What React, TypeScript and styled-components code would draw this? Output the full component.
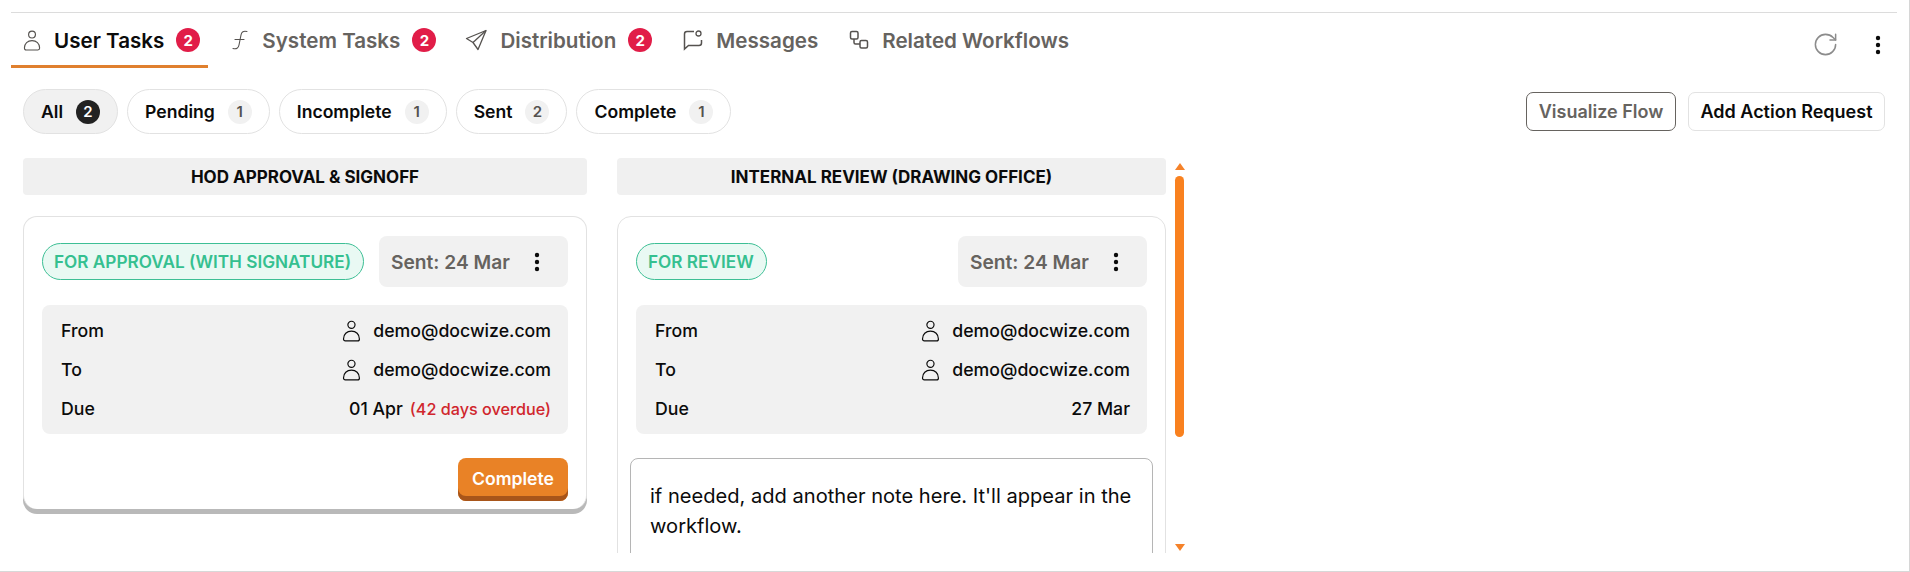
import React from "react";
import styled, { createGlobalStyle } from "styled-components";
import { RotateCw } from "lucide-react";

const GlobalStyle = createGlobalStyle`
  html, body {
    margin: 0;
    padding: 0;
    background: #ffffff;
  }
  body {
    font-family: "Inter", "Liberation Sans", sans-serif;
    color: #0b0b0b;
  }
  * {
    box-sizing: border-box;
  }
`;

const Page = styled.div`
  width: 1910px;
  height: 572px;
  padding: 12px 0 0 11px;
  border-right: 1px solid #d6d6d6;
  border-bottom: 1px solid #d8d8d8;
  overflow: hidden;
`;

const TabBar = styled.div`
  display: flex;
  align-items: stretch;
  height: 56px;
  margin-right: 12px;
  padding-right: 13px;
  border-top: 1px solid #dcdcdc;
`;

const Tab = styled.div<{ $active?: boolean }>`
  display: flex;
  align-items: center;
  height: 55px;
  padding: 2px 8px 0 12px;
  margin-right: 11px;
  font-size: 20.6px;
  font-weight: 600;
  color: ${(p) => (p.$active ? "#0b0b0b" : "#66635f")};
  border-bottom: 3px solid ${(p) => (p.$active ? "#e0802e" : "transparent")};
`;

const TabIcon = styled.span`
  display: flex;
  min-width: 18px;
  height: 22px;
  margin-right: 13px;
  color: #55524f;
  align-items: center;
  justify-content: center;
`;

const TabBadge = styled.span`
  display: flex;
  align-items: center;
  justify-content: center;
  width: 24px;
  height: 24px;
  margin-left: 12px;
  border-radius: 50%;
  background: #e11d48;
  color: #fff;
  font-size: 15px;
  font-weight: 700;
`;

const TabActions = styled.div`
  display: flex;
  align-items: center;
  margin-left: auto;
  gap: 33px;
  padding-top: 8px;
  color: #8c8c8c;
`;

const DotsButton = styled.span`
  display: flex;
  align-items: center;
  justify-content: center;
  width: 12px;
  color: #0b0b0b;
`;

const FilterRow = styled.div`
  display: flex;
  align-items: center;
  height: 45px;
  margin: 21px 24px 0 12px;
`;

const Pill = styled.div<{ $active?: boolean }>`
  display: flex;
  align-items: center;
  height: 45px;
  padding: 0 17px;
  margin-right: 9px;
  border: 1px solid #e2e2e2;
  border-radius: 23px;
  background: ${(p) => (p.$active ? "#f1f1f1" : "#fff")};
  font-size: 17.6px;
  font-weight: 600;
`;

const PillCount = styled.span<{ $active?: boolean }>`
  display: flex;
  align-items: center;
  justify-content: center;
  width: 24px;
  height: 24px;
  margin-left: 13px;
  border-radius: 50%;
  background: ${(p) => (p.$active ? "#222222" : "#f1f1f1")};
  color: ${(p) => (p.$active ? "#fff" : "#55524f")};
  font-size: 15px;
  font-weight: 600;
`;

const FilterActions = styled.div`
  display: flex;
  align-items: center;
  margin-left: auto;
  gap: 12px;
`;

const OutlineButton = styled.button`
  height: 39px;
  width: 150px;
  padding: 0;
  border: 1px solid #66635f;
  border-radius: 7px;
  background: #fff;
  color: #66635f;
  font-family: inherit;
  font-size: 18px;
  font-weight: 600;
`;

const PlainButton = styled(OutlineButton)`
  width: 197px;
  border-color: #e2e2e2;
  color: #0b0b0b;
`;

const Board = styled.div`
  display: flex;
  height: 395px;
  margin: 24px 0 0 12px;
`;

const Column = styled.div<{ $width: number }>`
  display: flex;
  flex-direction: column;
  width: ${(p) => p.$width}px;
  margin-right: 30px;
  overflow: hidden;
  flex: none;
`;

const ColumnTitle = styled.div`
  display: flex;
  align-items: center;
  justify-content: center;
  height: 37px;
  flex: none;
  border-radius: 4px;
  background: #f0f0f0;
  font-size: 17px;
  font-weight: 700;
`;

const Card = styled.div<{ $raised?: boolean }>`
  margin-top: 21px;
  padding: 19px 18px 18px;
  border: 1px solid #e2e2e2;
  border-radius: 14px;
  background: #fff;
  flex: none;
  ${(p) =>
    p.$raised
      ? "height: 293px; border-bottom-width: 0; box-shadow: 0 5px 0 #b9b9b9;"
      : "height: 360px; padding-bottom: 0;"}
`;

const CardHead = styled.div`
  display: flex;
  align-items: center;
  justify-content: space-between;
  height: 51px;
`;

const TypeBadge = styled.span`
  display: inline-flex;
  align-items: center;
  height: 37px;
  padding: 0 12px 0 11px;
  border: 1px solid #3dbf95;
  border-radius: 19px;
  background: #e9f9f3;
  color: #35c090;
  font-size: 17.2px;
  font-weight: 600;
  white-space: nowrap;
`;

const SentBox = styled.div`
  display: flex;
  align-items: center;
  width: 189px;
  height: 51px;
  padding: 0 25px 0 12px;
  justify-content: space-between;
  border-radius: 8px;
  background: #f1f1f1;
  color: #66635f;
  font-size: 19.2px;
  font-weight: 600;
  white-space: nowrap;
`;

const InfoBox = styled.div`
  display: flex;
  flex-direction: column;
  justify-content: center;
  height: 129px;
  margin-top: 18px;
  padding: 0 17px 0 19px;
  border-radius: 8px;
  background: #f1f1f1;
`;

const InfoRow = styled.div`
  display: flex;
  align-items: center;
  justify-content: space-between;
  height: 39px;
  font-size: 17.7px;
  font-weight: 500;
`;

const InfoValue = styled.span`
  display: flex;
  align-items: center;
  gap: 12px;
`;

const Overdue = styled.span`
  margin-left: -5px;
  font-size: 16.2px;
  color: #d0262d;
`;

const CardFoot = styled.div`
  display: flex;
  justify-content: flex-end;
  margin-top: 24px;
`;

const CompleteButton = styled.button`
  width: 110px;
  height: 43px;
  padding: 0 0 2px;
  border: none;
  border-radius: 8px;
  background: #e98226;
  box-shadow: inset 0 -5px 0 #a8551a;
  color: #fff;
  font-family: inherit;
  font-size: 17.6px;
  font-weight: 600;
`;

const NoteBox = styled.div`
  height: 140px;
  margin: 24px -6px 0;
  padding: 22px 19px;
  border: 1px solid #b5b5b5;
  border-radius: 8px;
  background: #fff;
  font-size: 20.1px;
  line-height: 30px;
`;

const ScrollTrack = styled.div`
  display: flex;
  flex-direction: column;
  align-items: center;
  width: 9px;
  margin-left: -21px;
  height: 395px;
  flex: none;
`;

const ScrollArrow = styled.span<{ $down?: boolean }>`
  flex: none;
  width: 0;
  height: 0;
  margin-top: ${(p) => (p.$down ? "107px" : "5px")};
  border-left: 5px solid transparent;
  border-right: 5px solid transparent;
  ${(p) => (p.$down ? "border-top" : "border-bottom")}: 7px solid #f5822a;
`;

const ScrollThumb = styled.div`
  flex: none;
  width: 9px;
  height: 261px;
  margin-top: 6px;
  border-radius: 5px;
  background: #f9811f;
`;

const SendIcon = styled.svg`
  margin-left: -2px;
`;

const UserSvg = ({ size = 22 }: { size?: number }) => (
  <svg width={size * 0.86} height={size} viewBox="0 0 19 22" fill="none" stroke="currentColor" strokeWidth="1.2">
    <circle cx="9.5" cy="4.8" r="3.6" />
    <path d="M1.500 19c0-4.800 3.400-7.800 8-7.800s8 3 8 7.800c0 1.300-.8 2-1.800 2H3.300c-1 0-1.800-.7-1.800-2z" />
  </svg>
);

const FunctionSvg = () => (
  <svg width="18" height="22" viewBox="0 0 18 22" fill="none" stroke="currentColor" strokeWidth="1.1" strokeLinecap="round">
    <path d="M16 2.500c-3.500-.8-5.500.2-6 3.500L8 16c-.6 3.300-2.500 4.300-6 3.500" />
    <path d="M4 10.500h9" />
  </svg>
);

const SendSvg = () => (
  <SendIcon width="22" height="22" viewBox="0 0 22 22" fill="none" stroke="currentColor" strokeWidth="1.3" strokeLinejoin="round">
    <path d="M21 1.500 1.500 9.500l6.500 4 5 7z" />
    <path d="M21 1.500 8 13.500" />
  </SendIcon>
);

const MessageSvg = () => (
  <svg width="20" height="22" viewBox="0 0 20 22" fill="none" stroke="currentColor" strokeWidth="1.5">
    <path d="M11 2.500H4c-1.600 0-2.500.9-2.500 2.500v15l4-3.500H16c1.600 0 2.500-.9 2.500-2.500v-3" />
    <circle cx="15.500" cy="4.500" r="2.500" strokeWidth="1.300" />
  </svg>
);

const LinkedSvg = () => (
  <svg width="20" height="22" viewBox="0 0 20 22" fill="none" stroke="currentColor" strokeWidth="1.500">
    <rect x="1.500" y="2.500" width="7.500" height="7.500" rx="1.500" />
    <rect x="11" y="11.500" width="7.500" height="7.500" rx="1.500" />
    <path d="M5 10v3.500c0 1 .6 1.500 1.500 1.500H11" />
  </svg>
);

const DotsSvg = () => (
  <svg width="6" height="20" viewBox="0 0 6 20" fill="currentColor">
    <circle cx="3" cy="3" r="2.200" />
    <circle cx="3" cy="10" r="2.200" />
    <circle cx="3" cy="17" r="2.200" />
  </svg>
);

const tabs = [
  { label: "User Tasks", icon: <UserSvg size={21} />, count: 2, active: true },
  { label: "System Tasks", icon: <FunctionSvg />, count: 2 },
  { label: "Distribution", icon: <SendSvg />, count: 2 },
  { label: "Messages", icon: <MessageSvg /> },
  { label: "Related Workflows", icon: <LinkedSvg /> },
];

const filters = [
  { label: "All", count: 2, active: true },
  { label: "Pending", count: 1 },
  { label: "Incomplete", count: 1 },
  { label: "Sent", count: 2 },
  { label: "Complete", count: 1 },
];

interface TaskInfoProps {
  type: string;
  due: string;
  overdue?: string;
}

const TaskInfo: React.FC<TaskInfoProps> = ({ type, due, overdue }) => (
  <>
    <CardHead>
      <TypeBadge>{type}</TypeBadge>
      <SentBox>
        Sent: 24 Mar
        <DotsButton>
          <DotsSvg />
        </DotsButton>
      </SentBox>
    </CardHead>
    <InfoBox>
      <InfoRow>
        From
        <InfoValue>
          <UserSvg />
          demo@docwize.com
        </InfoValue>
      </InfoRow>
      <InfoRow>
        To
        <InfoValue>
          <UserSvg />
          demo@docwize.com
        </InfoValue>
      </InfoRow>
      <InfoRow>
        Due
        <InfoValue>
          {due}
          {overdue && <Overdue>{overdue}</Overdue>}
        </InfoValue>
      </InfoRow>
    </InfoBox>
  </>
);

const App: React.FC = () => {
  return (
    <Page>
      <GlobalStyle />
      <TabBar>
        {tabs.map((tab) => (
          <Tab key={tab.label} $active={tab.active}>
            <TabIcon>{tab.icon}</TabIcon>
            {tab.label}
            {tab.count && <TabBadge>{tab.count}</TabBadge>}
          </Tab>
        ))}
        <TabActions>
          <RotateCw size={27} strokeWidth={1.35} />
          <DotsButton>
            <DotsSvg />
          </DotsButton>
        </TabActions>
      </TabBar>
      <FilterRow>
        {filters.map((filter) => (
          <Pill key={filter.label} $active={filter.active}>
            {filter.label}
            <PillCount $active={filter.active}>{filter.count}</PillCount>
          </Pill>
        ))}
        <FilterActions>
          <OutlineButton>Visualize Flow</OutlineButton>
          <PlainButton>Add Action Request</PlainButton>
        </FilterActions>
      </FilterRow>
      <Board>
        <Column $width={564}>
          <ColumnTitle>HOD APPROVAL &amp; SIGNOFF</ColumnTitle>
          <Card $raised>
            <TaskInfo type="FOR APPROVAL (WITH SIGNATURE)" due="01 Apr" overdue="(42 days overdue)" />
            <CardFoot>
              <CompleteButton>Complete</CompleteButton>
            </CardFoot>
          </Card>
        </Column>
        <Column $width={549}>
          <ColumnTitle>INTERNAL REVIEW (DRAWING OFFICE)</ColumnTitle>
          <Card>
            <TaskInfo type="FOR REVIEW" due="27 Mar" />
            <NoteBox>if needed, add another note here. It'll appear in the workflow.</NoteBox>
          </Card>
        </Column>
        <ScrollTrack>
          <ScrollArrow />
          <ScrollThumb />
          <ScrollArrow $down />
        </ScrollTrack>
      </Board>
    </Page>
  );
};

export default App;
